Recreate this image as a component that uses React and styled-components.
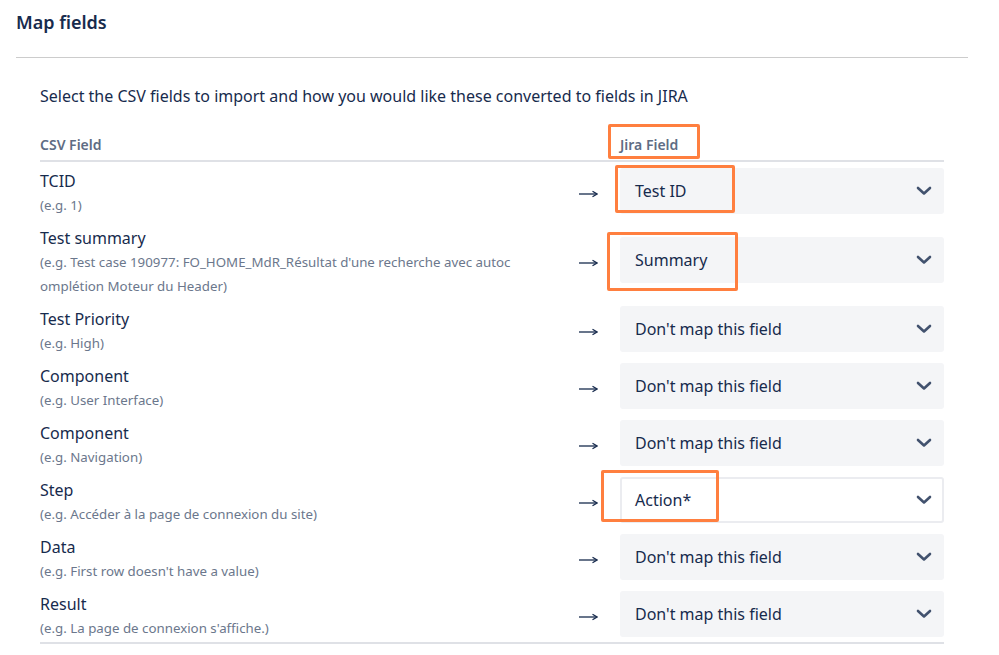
import React from 'react';
import styled, { createGlobalStyle } from 'styled-components';

const GlobalStyle = createGlobalStyle`
  body {
    margin: 0;
    background: #ffffff;
    font-family: "Noto Sans", "Open Sans", sans-serif;
    color: #172b4d;
  }
`;

const Page = styled.div`
  width: 999px;
  height: 655px;
  overflow: hidden;
  padding: 0 31px 0 16px;
  box-sizing: border-box;
`;

const Heading = styled.h2`
  font-size: 18px;
  font-weight: 600;
  margin: 0;
  padding-top: 9px;
  line-height: 26px;
  padding-bottom: 22px;
  border-bottom: 1px solid #cccccc;
`;

const Body = styled.div`
  padding: 0 24px;
`;

const Intro = styled.p`
  font-size: 16px;
  line-height: 24px;
  margin: 26px 0 0;
`;

const Table = styled.div`
  margin-top: 27px;
  border-bottom: 2px solid #dfe1e6;
`;

const HeaderRow = styled.div`
  display: grid;
  grid-template-columns: 1fr 60px 324px;
  border-bottom: 2px solid #dfe1e6;
  font-size: 14px;
  font-weight: 600;
  color: #5e6c84;
  line-height: 20px;
  padding-bottom: 5px;
`;

const HeaderCell = styled.div`
  grid-column: ${p => p.$col};
  position: relative;
`;

const Row = styled.div`
  display: grid;
  grid-template-columns: 1fr 60px 324px;
  align-items: center;
  padding: 3px 0 2px;
`;

const FieldInfo = styled.div`
  padding-top: 4px;
`;

const Label = styled.div`
  font-size: 16px;
  line-height: 24px;
`;

const Hint = styled.div`
  font-size: 13.3px;
  line-height: 24px;
  color: #6b778c;
  max-width: 484px;
`;

const ArrowCell = styled.div`
  display: flex;
  justify-content: center;
  padding: 6px 3px 0 0;
`;

const Select = styled.div`
  position: relative;
  height: 46px;
  box-sizing: border-box;
  display: flex;
  align-items: center;
  justify-content: space-between;
  padding: 0 9px 0 13px;
  border-radius: 3px;
  font-size: 16px;
  background: ${p => (p.$focused ? '#ffffff' : '#f4f5f7')};
  border: 2px solid ${p => (p.$focused ? '#ebecf0' : '#f4f5f7')};
`;

const Mark = styled.div`
  position: absolute;
  box-sizing: border-box;
  border: 3px solid #ff7f3f;
  border-radius: 2px;
  pointer-events: none;
`;

const Arrow = () => (
  <svg width="19" height="8" viewBox="0 0 19 8">
    <path d="M0 4h17" stroke="#172b4d" strokeWidth="1.3" />
    <path d="M13.5 1.2L18 4l-4.5 2.8" fill="none" stroke="#172b4d" strokeWidth="1.3" />
  </svg>
);

const Chevron = () => (
  <svg width="18" height="12" viewBox="0 0 18 12">
    <path d="M3 3l6 5.5L15 3" fill="none" stroke="#42526e" strokeWidth="2.6" strokeLinecap="round" strokeLinejoin="round" />
  </svg>
);

const rows = [
  { label: 'TCID', hint: '(e.g. 1)', value: 'Test ID', mark: { left: -7, top: -5, width: 120, height: 48 } },
  {
    label: 'Test summary',
    hint: "(e.g. Test case 190977: FO_HOME_MdR_Résultat d'une recherche avec autoc omplétion Moteur du Header)",
    value: 'Summary',
    mark: { left: -15, top: -7, width: 131, height: 59 }
  },
  { label: 'Test Priority', hint: '(e.g. High)' },
  { label: 'Component', hint: '(e.g. User Interface)' },
  { label: 'Component', hint: '(e.g. Navigation)' },
  {
    label: 'Step',
    hint: '(e.g. Accéder à la page de connexion du site)',
    value: 'Action*',
    focused: true,
    mark: { left: -21, top: -9, width: 118, height: 52 }
  },
  { label: 'Data', hint: "(e.g. First row doesn't have a value)" },
  { label: 'Result', hint: "(e.g. La page de connexion s'affiche.)" }
];

const App = () => (
  <Page>
    <GlobalStyle />
    <Heading>Map fields</Heading>
    <Body>
      <Intro>Select the CSV fields to import and how you would like these converted to fields in JIRA</Intro>
      <Table>
        <HeaderRow>
          <HeaderCell $col={1}>CSV Field</HeaderCell>
          <HeaderCell $col={3}>
            Jira Field
            <Mark style={{ left: -12, top: -11, width: 92, height: 35 }} />
          </HeaderCell>
        </HeaderRow>
        {rows.map((r, i) => (
          <Row key={i}>
            <FieldInfo>
              <Label>{r.label}</Label>
              <Hint>{r.hint}</Hint>
            </FieldInfo>
            <ArrowCell>
              <Arrow />
            </ArrowCell>
            <Select $focused={r.focused}>
              <span>{r.value || "Don't map this field"}</span>
              <Chevron />
              {r.mark && <Mark style={r.mark} />}
            </Select>
          </Row>
        ))}
      </Table>
    </Body>
  </Page>
);

export default App;
